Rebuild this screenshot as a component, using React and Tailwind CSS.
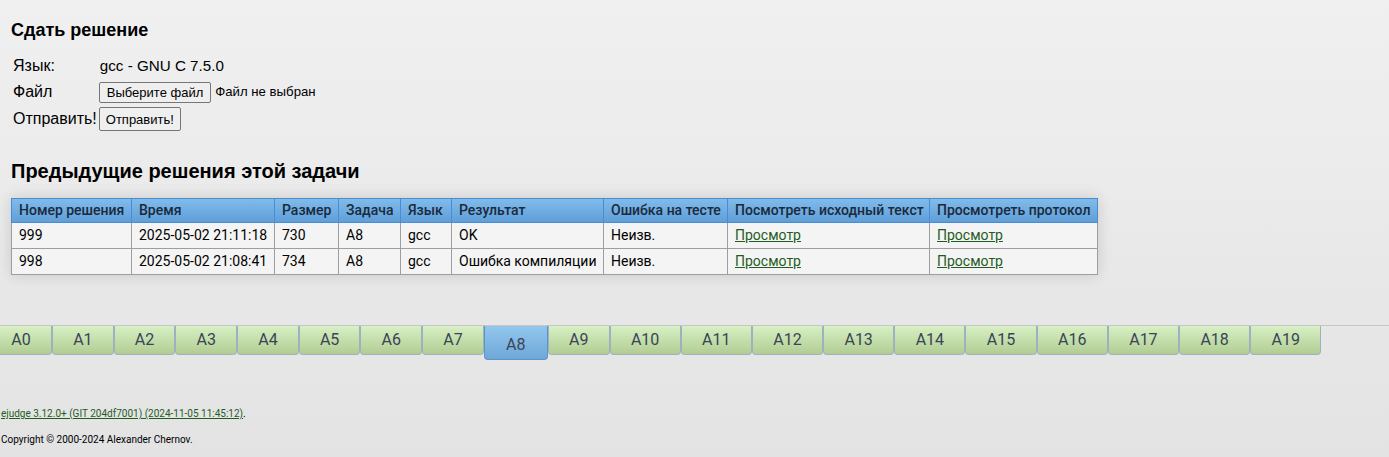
const ROWS = [
  { id: '999', time: '2025-05-02 21:11:18', size: '730', prob: 'A8', lang: 'gcc', res: 'OK', test: 'Неизв.' },
  { id: '998', time: '2025-05-02 21:08:41', size: '734', prob: 'A8', lang: 'gcc', res: 'Ошибка компиляции', test: 'Неизв.' },
]

const HEAD = [
  ['Номер решения', 'w-[120px]'],
  ['Время', 'w-[143px]'],
  ['Размер', 'w-[64px]'],
  ['Задача', 'w-[62px]'],
  ['Язык', 'w-[51px]'],
  ['Результат', 'w-[152px]'],
  ['Ошибка на тесте', 'w-[124px]'],
  ['Посмотреть исходный текст', 'w-[202px]'],
  ['Просмотреть протокол', 'w-[168px]'],
]

const TABS = Array.from({ length: 20 }, (_, i) => 'A' + i)

function Tab({ name, active, index }) {
  if (active) {
    return (
      <div className="w-[64px] shrink-0 h-[34px] pt-[8px] border border-t-0 border-[#5b95c4] rounded-b-[4px] bg-gradient-to-b from-[#92c6ee] to-[#6ea8d8] text-[16px] text-[#3a4456] leading-[22px]">
        {name}
      </div>
    )
  }
  const size = index === 0 ? 'w-[62px] ml-[-10px]' : index < 10 ? 'w-[61.7px]' : 'w-[71.2px]'
  return (
    <div className={`${size} shrink-0 h-[29px] border border-t-0 border-[#9fb0c0] rounded-b-[4px] bg-gradient-to-b from-[#d8f0c4] to-[#b1cd93] text-[16px] text-[#3a4456] leading-[27px]`}>
      {name}
    </div>
  )
}

function Cell({ children }) {
  return <td className="border border-[#9e9e9e] px-[7px] whitespace-nowrap overflow-hidden">{children}</td>
}

export default function App() {
  return (
    <div className="h-[457px] bg-gradient-to-b from-[#f0f0f0] to-[#e3e3e3] font-['Liberation_Sans',Arial,sans-serif] text-black overflow-hidden">
      <div className="pl-[11px] pt-[19px]">
        <h2 className="text-[18px] font-bold leading-[22px]">Сдать решение</h2>

        <table className="mt-[11px] ml-[-2px] border-separate border-spacing-[2px]">
          <tbody>
            <tr className="h-[22px]">
              <td className="w-[85px] pl-[2px] text-[16px]">Язык:</td>
              <td className="pl-[1px] text-[15.2px]">gcc - GNU C 7.5.0</td>
            </tr>
            <tr className="h-[22px]">
              <td className="pl-[2px] text-[16px]">Файл</td>
              <td>
                <div className="flex items-center gap-[4px]">
                  <button className="h-[21px] px-[7px] text-[13px] bg-[#efefef] border border-[#767676] rounded-[2px]">Выберите файл</button>
                  <span className="text-[13.2px]">Файл не выбран</span>
                </div>
              </td>
            </tr>
            <tr className="h-[26px]">
              <td className="pl-[2px] text-[16px]">Отправить!</td>
              <td>
                <button className="h-[24px] px-[6px] text-[13px] bg-[#efefef] border border-[#767676] rounded-[2px]">Отправить!</button>
              </td>
            </tr>
          </tbody>
        </table>

        <h2 className="mt-[25px] text-[20px] font-bold leading-[24px]">Предыдущие решения этой задачи</h2>

        <table className="mt-[15px] w-[1086px] table-fixed border-collapse font-['Roboto',sans-serif] text-[14px] shadow-[0_0_14px_rgba(0,0,0,0.14)]">
          <thead>
            <tr className="h-[24px] bg-gradient-to-b from-[#80bbea] to-[#5e9dd8]">
              {HEAD.map(([h, w]) => (
                <th key={h} className={`${w} border border-[#4b8bd0] px-[7px] text-left font-medium text-[#1b2a3c] whitespace-nowrap overflow-hidden`}>{h}</th>
              ))}
            </tr>
          </thead>
          <tbody>
            {ROWS.map(r => (
              <tr key={r.id} className="h-[26px] bg-[#f4f4f4]">
                <Cell>{r.id}</Cell>
                <Cell>{r.time}</Cell>
                <Cell>{r.size}</Cell>
                <Cell>{r.prob}</Cell>
                <Cell>{r.lang}</Cell>
                <Cell>{r.res}</Cell>
                <Cell>{r.test}</Cell>
                <Cell><a href="#" className="underline text-[#1f5d1f]">Просмотр</a></Cell>
                <Cell><a href="#" className="underline text-[#1f5d1f]">Просмотр</a></Cell>
              </tr>
            ))}
          </tbody>
        </table>
      </div>

      <div className="mt-[50px] border-t border-[#c6c6c6] font-['Roboto',sans-serif]">
        <div className="flex items-start h-[34px] text-center">
          {TABS.map((t, i) => (
            <Tab key={t} name={t} active={t === 'A8'} index={i} />
          ))}
        </div>
      </div>

      <div className="pl-[1px] mt-[48px] font-['Roboto',sans-serif] text-[10px] leading-[12px]">
        <p><a href="#" className="underline text-[#1f5d1f]">ejudge 3.12.0+ (GIT 204df7001) (2024-11-05 11:45:12)</a>.</p>
        <p className="mt-[14px]">Copyright © 2000-2024 Alexander Chernov.</p>
      </div>
    </div>
  )
}
